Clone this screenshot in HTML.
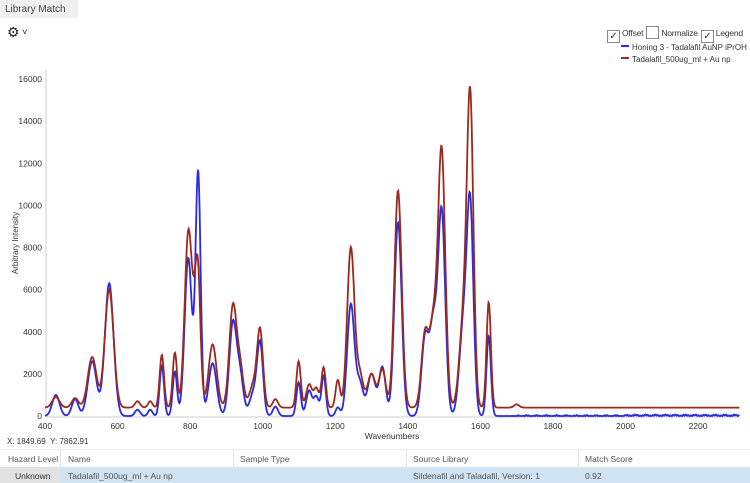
<!DOCTYPE html>
<html><head><meta charset="utf-8"><style>
body{margin:0;width:750px;height:483px;overflow:hidden;background:#fff;font-family:"Liberation Sans",sans-serif;position:relative}
.t{position:absolute;white-space:nowrap}
.tab{position:absolute;left:0;top:0;width:78px;height:18px;background:#f0f0f0;font-size:10px;color:#444;padding:4px 0 0 5px;box-sizing:border-box}
.cb{display:inline-block;width:11px;height:11px;border:1px solid #888;vertical-align:-3px;margin:0 2px 0 3px;font-size:10px;line-height:11px;text-align:center;background:#fff}
.hdr{position:absolute;left:0;top:449px;width:750px;height:18px;background:#fff;border-top:1px solid #eee;font-size:8.5px;color:#555}
.row{position:absolute;left:0;top:467px;width:750px;height:16px;background:#cfe3f3;font-size:8.5px;color:#555}
.hdr span,.row span{position:absolute;top:4px}
.sep{position:absolute;top:0;width:1px;height:18px;background:#e4e4e4}
</style></head><body>
<div class="tab">Library Match</div>
<div class="t" style="left:7px;top:24px;font-size:14px;color:#222">⚙<span style="font-size:9px;vertical-align:2px"> ˅</span></div>
<div class="t" style="left:604px;top:26px;font-size:8.5px;color:#333;letter-spacing:-0.2px"><span class="cb">✓</span>Offset<span class="cb"></span>Normalize<span class="cb">✓</span>Legend</div>
<div class="t" style="left:621px;top:43px;font-size:8px;color:#333"><span style="display:inline-block;width:8px;height:2px;background:#2a2ae0;vertical-align:3px;margin-right:3px"></span>Honing 3 - Tadalafil AuNP iPrOH</div>
<div class="t" style="left:621px;top:55px;font-size:8px;color:#333"><span style="display:inline-block;width:8px;height:2px;background:#9b2a1e;vertical-align:3px;margin-right:3px"></span>Tadalafil_500ug_ml + Au np</div>
<svg id="s" width="750" height="483" style="position:absolute;left:0;top:0" font-family="Liberation Sans" font-size="8.5" fill="#333"></svg>
<div class="t" style="left:7px;top:437px;font-size:8px;color:#333">X: 1849.69 &nbsp;Y: 7862.91</div>
<div class="hdr"><span style="left:8px">Hazard Level</span><div class="sep" style="left:60px"></div><span style="left:68px">Name</span><div class="sep" style="left:233px"></div><span style="left:240px">Sample Type</span><div class="sep" style="left:406px"></div><span style="left:413px">Source Library</span><div class="sep" style="left:578px"></div><span style="left:585px">Match Score</span></div>
<div class="row"><div style="position:absolute;left:0;top:0;width:60px;height:16px;background:#e2e2e2"></div><span style="left:15px;color:#333">Unknown</span><span style="left:68px">Tadalafil_500ug_ml + Au np</span><span style="left:413px">Sildenafil and Taladafil, Version: 1</span><span style="left:585px">0.92</span></div>
<script>
var s=document.getElementById('s'),h='';
function X(w){return 45+(w-400)*0.3628}
function Y(v){return 416-v*0.02106}
h+='<line x1="46" y1="70" x2="46" y2="417" stroke="#ccc"/><line x1="46" y1="417" x2="740" y2="417" stroke="#ccc"/>';
for(var v=0;v<=16000;v+=2000)h+='<text x="42" y="'+(Y(v)+3)+'" text-anchor="end">'+v+'</text>';
for(var w=400;w<=2200;w+=200)h+='<text x="'+X(w)+'" y="429" text-anchor="middle">'+w+'</text>';
h+='<text x="392" y="439" text-anchor="middle">Wavenumbers</text>';
h+='<text transform="translate(18,243) rotate(-90)" text-anchor="middle" font-size="8">Arbitrary Intensity</text>';
var P=[[430,1000,500,10],[483,800,450,9],[530,2600,2400,12],[577,6300,5600,12],[655,300,300,7],[690,300,300,6],[722,2400,2500,6],[758,2100,2600,6],[795,7500,8200,10],[822,11500,4500,7],[815,0,3000,9],[862,2500,3000,11],[918,4400,4800,10],[938,1800,1800,9],[993,3300,3500,8],[975,1100,1100,11],[1035,450,400,7],[1099,1600,2200,6],[1128,1200,1100,8],[1148,900,900,7],[1168,1900,1900,6],[1207,400,1300,6],[1243,5300,7600,10],[1268,1500,1500,9],[1300,2000,1600,11],[1330,2300,1800,9],[1373,9200,10300,10],[1448,3800,3600,10],[1470,4000,3600,9],[1493,9800,12300,10],[1553,4200,4000,11],[1572,9600,14300,9],[1623,3800,5000,6],[1700,0,150,7]];
function f(w,k){var y=0;for(var i=0;i<P.length;i++){var d=(w-P[i][0])/P[i][3];y+=P[i][k]*Math.exp(-d*d/2)}return y}
var b='',r='';
for(var w=400;w<=2315;w+=1.5){var yb=f(w,1),yr=f(w,2)+400;
if(w>1700)yb+=Math.max(0,Math.sin(w*0.9)*25+Math.sin(w*0.23)*25+(w>2000?25:0));
b+=(b?'L':'M')+X(w).toFixed(1)+' '+Y(yb).toFixed(1);r+=(r?'L':'M')+X(w).toFixed(1)+' '+Y(yr).toFixed(1)}
h+='<path d="'+b+'" fill="none" stroke="#2a2ae0" stroke-width="1.8"/><path d="'+r+'" fill="none" stroke="#9b2a1e" stroke-width="1.8"/>';
s.innerHTML=h;
</script>
</body></html>
